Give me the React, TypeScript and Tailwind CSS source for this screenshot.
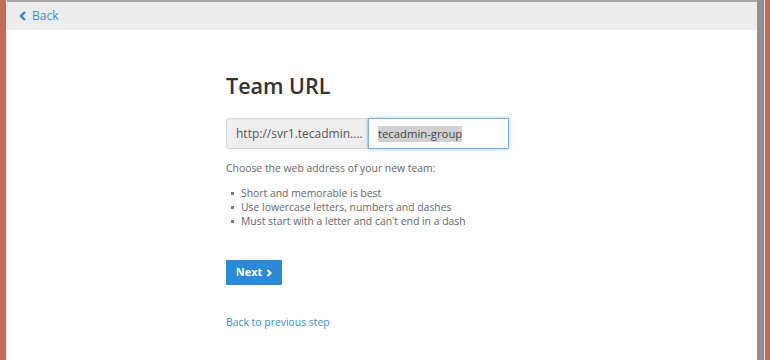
const ChevronLeft = () => (
  <svg width="8" height="10" viewBox="0 0 8 10" className="mr-[5px]">
    <path d="M6 1 L2 5 L6 9" fill="none" stroke="#2f84d6" strokeWidth="2.4" />
  </svg>
)

const ChevronRight = () => (
  <svg width="6" height="8" viewBox="0 0 6 8" className="ml-[4px]">
    <path d="M1.5 1 L4.5 4 L1.5 7" fill="none" stroke="#fff" strokeWidth="2" />
  </svg>
)

export default function App() {
  return (
    <div
      className="flex w-[770px] h-[360px] bg-[#c46b57] overflow-hidden"
      style={{ fontFamily: '"Open Sans", "Liberation Sans", sans-serif' }}
    >
      <div className="w-[6px] shrink-0" />
      <div className="w-px shrink-0 bg-[#e9e9e9]" />
      <div className="flex flex-col flex-1 bg-white">
        <div className="h-[2px] bg-[#a8a8a8]" />
        <div className="h-[28px] bg-[#ececec] flex items-center pl-[12px]">
          <a className="flex items-center text-[12px] text-[#3a8bd8] -mt-[1px]">
            <ChevronLeft />
            Back
          </a>
        </div>
        <div className="flex-1 pl-[219px] pt-[42px]">
          <h1 className="text-[21.5px] font-semibold text-[#333] leading-[28px]">Team URL</h1>
          <div className="flex mt-[18px] h-[31px] w-[283px]">
            <div className="w-[142px] shrink-0 flex items-center pl-[9px] bg-[#eeeeee] border border-[#d4d4d4] rounded-l-[3px] text-[12px] text-[#555]">
              http://svr1.tecadmin....
            </div>
            <div className="flex-1 flex items-center pl-[9px] border border-[#74b4ec] shadow-[0_0_4px_rgba(102,175,233,0.6)]">
              <span className="bg-[#d1d1d1] text-[11.3px] text-[#444] leading-[16px]">tecadmin-group</span>
            </div>
          </div>
          <p className="mt-[12px] text-[10.4px] text-[#666] leading-[14px]">
            Choose the web address of your new team:
          </p>
          <ul className="mt-[11px] text-[10.4px] text-[#666] leading-[14px]">
            {[
              'Short and memorable is best',
              'Use lowercase letters, numbers and dashes',
              "Must start with a letter and can't end in a dash",
            ].map((t) => (
              <li key={t} className="flex items-center">
                <span className="w-[3px] h-[3px] bg-[#777] ml-[5px] mr-[7px]" />
                {t}
              </li>
            ))}
          </ul>
          <button className="mt-[32px] flex items-center justify-center w-[56px] h-[25px] bg-[#2a8ad8] text-white text-[11px] font-bold rounded-[1px]">
            Next
            <ChevronRight />
          </button>
          <a className="block mt-[30px] text-[10.4px] text-[#3a8bd8]">Back to previous step</a>
        </div>
      </div>
      <div className="w-[7px] shrink-0 bg-[#8f8f8f]" />
      <div className="w-px shrink-0 bg-[#dcdcdc]" />
      <div className="w-[5px] shrink-0" />
    </div>
  )
}
